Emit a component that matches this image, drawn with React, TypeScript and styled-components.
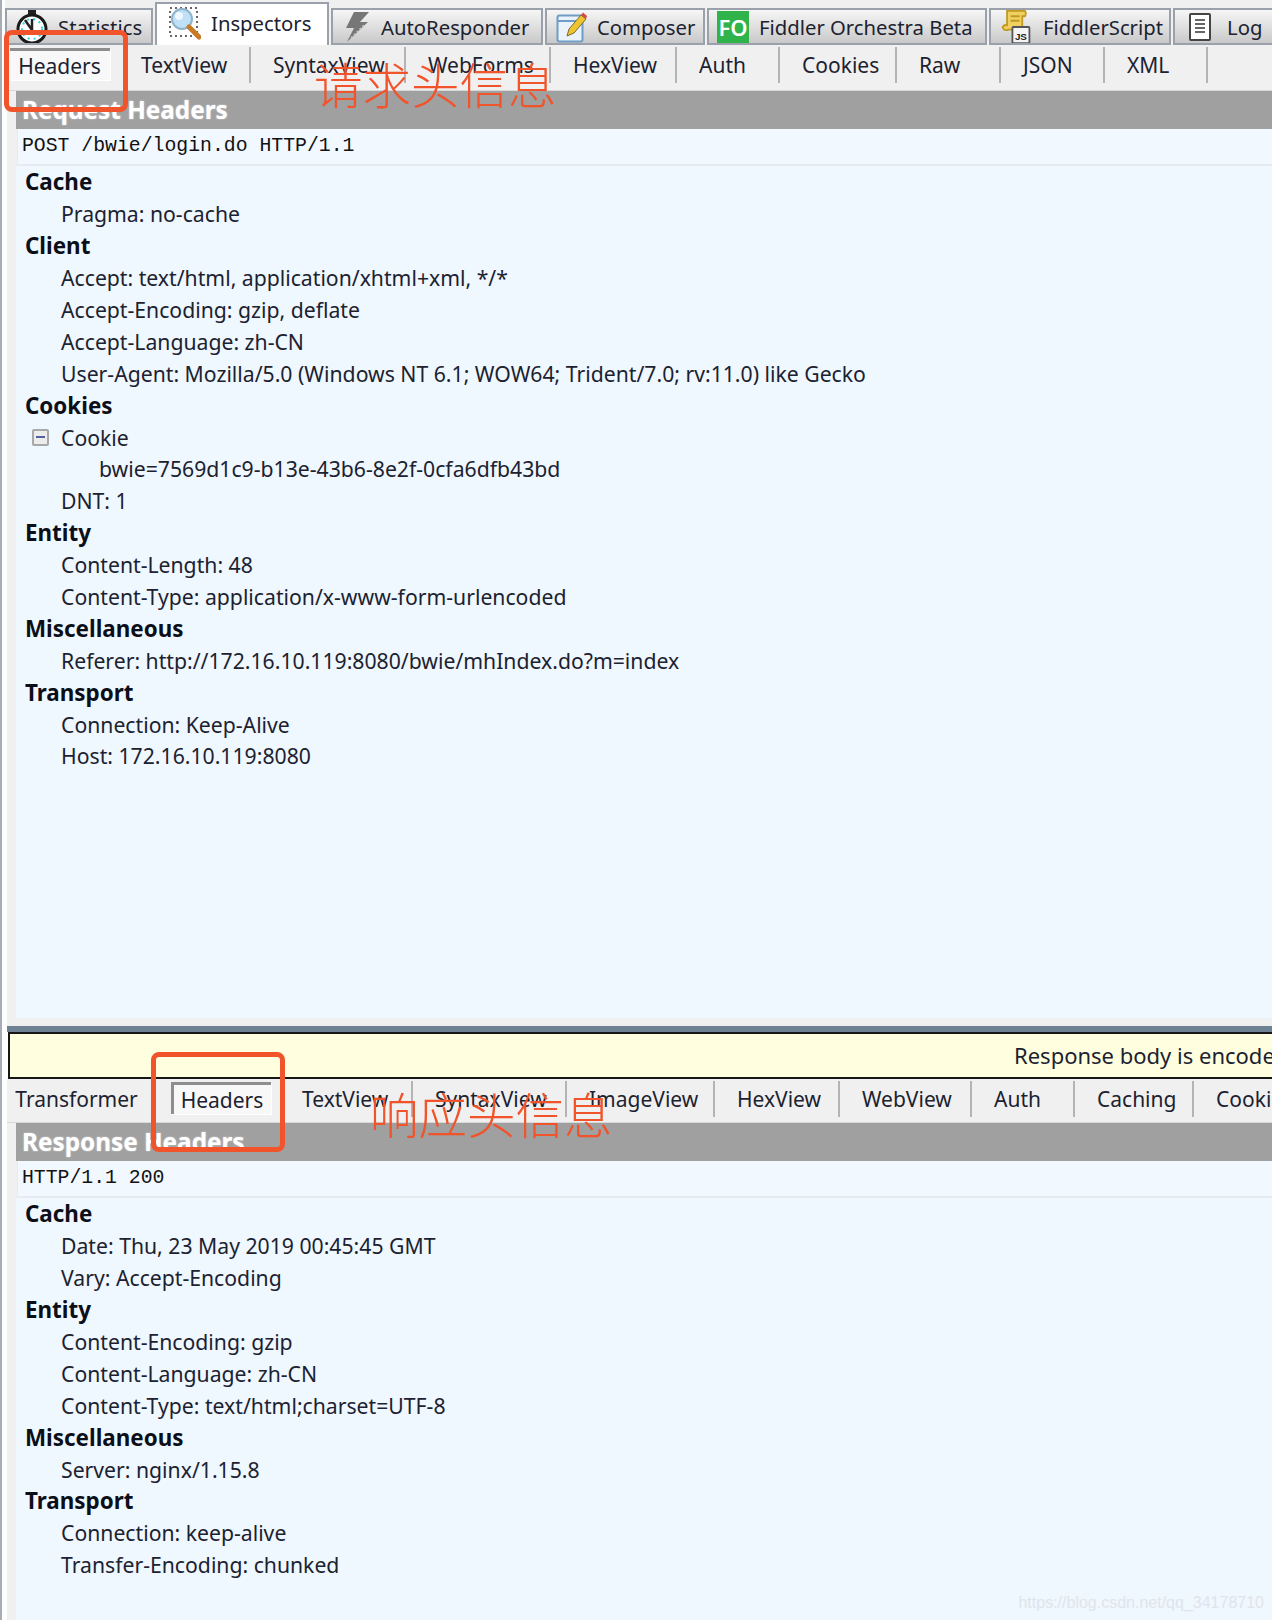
import React from "react";
import styled, { createGlobalStyle } from "styled-components";

const Global = createGlobalStyle`
  html, body {
    margin: 0;
    padding: 0;
    background: #fff;
  }
  * {
    box-sizing: border-box;
  }
`;

const Page = styled.div`
  position: relative;
  width: 1272px;
  height: 1620px;
  overflow: hidden;
  background: #fff;
  border-left: 2px solid #a6adb5;
  padding-left: 5px;
  font-family: "Noto Sans", "Noto Sans CJK SC", sans-serif;
  font-size: 21.2px;
  color: #1c2230;
`;

const TopTabs = styled.div`
  display: flex;
  align-items: flex-end;
  height: 45px;
  margin-left: -2px;
  background: #f0f0f0;
  font-size: 20.3px;
  white-space: nowrap;
`;

const Tab = styled.div<{ $w: number; $pad: number; $gap: number; $active?: boolean }>`
  flex: none;
  display: flex;
  align-items: center;
  gap: ${(p) => p.$gap}px;
  width: ${(p) => p.$w}px;
  height: ${(p) => (p.$active ? 43 : 37)}px;
  padding-left: ${(p) => p.$pad}px;
  padding-bottom: ${(p) => (p.$active ? 4 : 0)}px;
  margin-right: 2px;
  border: 2px solid #9aa1aa;
  border-bottom: ${(p) => (p.$active ? "none" : "2px solid #9aa1aa")};
  background: ${(p) => (p.$active ? "#fff" : "linear-gradient(#f6f6f6, #c9c9c9)")};
  overflow: hidden;
`;

const Pane = styled.div<{ $h: number }>`
  display: flex;
  flex-direction: column;
  height: ${(p) => p.$h}px;
  background: #f0f0f0;
  overflow: hidden;
`;

const SubTabs = styled.div<{ $h: number }>`
  flex: none;
  display: flex;
  height: ${(p) => p.$h}px;
  padding-top: 2px;
  margin-left: -7px;
  border-bottom: 1px solid #d8d8d8;
  font-size: 21px;
  white-space: nowrap;
`;

const SubTab = styled.div<{ $w: number }>`
  flex: none;
  display: flex;
  align-items: center;
  width: ${(p) => p.$w}px;
  height: 36px;
  padding-left: 22px;
  border-right: 2px solid #b4b4b4;
`;

const PlainTab = styled.div<{ $w: number; $lead?: number }>`
  flex: none;
  display: flex;
  align-items: flex-start;
  justify-content: center;
  width: ${(p) => p.$w}px;
  height: 36px;
  padding-left: ${(p) => p.$lead ?? 0}px;
  line-height: 36px;
`;

const ActiveTab = styled.div<{ $left?: boolean }>`
  display: flex;
  align-items: center;
  justify-content: center;
  width: 100px;
  height: 32px;
  margin-top: 1px;
  padding-top: 1px;
  border-top: 3px solid #8e8e8e;
  border-left: ${(p) => (p.$left ? "3px solid #8e8e8e" : "none")};
  background: #f8f8f8;
  box-shadow: 1px 1px 0 #fff;
`;

const Body = styled.div`
  flex: 1;
  display: flex;
  flex-direction: column;
  padding-left: 9px;
`;

const TitleBar = styled.div`
  flex: none;
  display: flex;
  align-items: center;
  height: 38px;
  padding: 0 0 2px 6px;
  background: #a0a0a0;
  color: #fff;
  font-size: 24.3px;
  font-weight: 700;
  text-shadow: 0 0 2px #d8d8d8;
`;

const StartLine = styled.div`
  flex: none;
  display: flex;
  align-items: center;
  height: 37px;
  padding: 0 0 2px 4px;
  margin-left: 1px;
  background: #f2f8ff;
  border-bottom: 2px solid #e6ebf0;
  border-left: 1px solid #e6ebf0;
  font-family: "Liberation Mono", monospace;
  font-size: 19.8px;
  color: #111;
`;

const Rows = styled.div`
  flex: 1;
  background: #eff7ff;
`;

const Row = styled.div<{ $level: number; $bold?: boolean }>`
  display: flex;
  align-items: center;
  height: 31.9px;
  padding-left: ${(p) => [9, 45, 83][p.$level]}px;
  font-size: ${(p) => (p.$bold ? 22.4 : 21.2)}px;
  font-weight: ${(p) => (p.$bold ? 700 : 400)};
  color: ${(p) => (p.$bold ? "#0c0f18" : "#1c2230")};
  white-space: nowrap;
`;

const ToggleRow = styled(Row)`
  padding-left: 16px;
`;

const Toggle = styled.span`
  flex: none;
  display: flex;
  align-items: center;
  justify-content: center;
  width: 17px;
  height: 17px;
  margin-right: 12px;
  border: 2px solid #a8a8a8;
  border-radius: 2px;
  background: #ececec;
  &::after {
    content: "";
    width: 9px;
    height: 2px;
    background: #5560a0;
  }
`;

const DividerGap = styled.div`
  height: 8px;
  background: #f0f0f0;
`;

const SteelBar = styled.div`
  height: 6px;
  background: #6f8294;
`;

const Notice = styled.div`
  display: flex;
  align-items: center;
  height: 47px;
  padding: 0 0 2px 1004px;
  margin-left: 1px;
  border: 2px solid #161616;
  border-right: none;
  background: #ffffe0;
  font-size: 22px;
  white-space: nowrap;
  overflow: hidden;
`;

const FoBadge = styled.div`
  flex: none;
  display: flex;
  align-items: center;
  justify-content: center;
  width: 32px;
  height: 32px;
  background: #2fb34a;
  color: #fff;
  font-size: 22px;
  font-weight: 600;
`;

const RedBox = styled.div<{ $x: number; $y: number; $w: number; $h: number }>`
  position: absolute;
  left: ${(p) => p.$x}px;
  top: ${(p) => p.$y}px;
  width: ${(p) => p.$w}px;
  height: ${(p) => p.$h}px;
  border: 5px solid #f1532a;
  border-radius: 8px;
`;

const Note = styled.div<{ $x: number; $y: number }>`
  position: absolute;
  left: ${(p) => p.$x}px;
  top: ${(p) => p.$y}px;
  font-family: "Noto Sans CJK SC", sans-serif;
  font-size: 48.5px;
  font-weight: 300;
  line-height: 52px;
  color: #f1532a;
  white-space: nowrap;
`;

const Watermark = styled.div`
  position: absolute;
  right: 8px;
  bottom: 8px;
  font-family: "Liberation Sans", sans-serif;
  font-size: 16px;
  color: #dfe5ea;
`;

const StopwatchIcon = () => (
  <svg width="32" height="36" viewBox="0 0 32 36">
    <rect x="12" y="0" width="8" height="5" fill="#222" />
    <circle cx="16" cy="20" r="14" fill="#fff" stroke="#1a1a1a" strokeWidth="3" />
    <circle cx="16" cy="20" r="10" fill="none" stroke="#35d0dc" strokeWidth="2" strokeDasharray="2 4" />
    <path d="M9 11 L16 21 L16 10" fill="none" stroke="#222" strokeWidth="2.5" />
  </svg>
);

const InspectIcon = () => (
  <svg width="32" height="34" viewBox="0 0 32 34">
    <rect x="1" y="2" width="27" height="28" fill="none" stroke="#666" strokeWidth="2" strokeDasharray="2 3" />
    <circle cx="13" cy="13" r="10" fill="#bfe0f6" stroke="#8fb4cc" strokeWidth="2" />
    <circle cx="10" cy="10" r="4" fill="#eef8ff" />
    <path d="M20 21 L30 31" stroke="#c87a28" strokeWidth="5" strokeLinecap="round" />
  </svg>
);

const BoltIcon = () => (
  <svg width="26" height="32" viewBox="0 0 26 32">
    <path d="M10 1 H25 L16 11 H24 L3 31 L10 17 H2 Z" fill="#777" />
    <path d="M7 27 L20 14" stroke="#c8c8c8" strokeWidth="1.5" strokeDasharray="2 2" />
  </svg>
);

const ComposeIcon = () => (
  <svg width="32" height="32" viewBox="0 0 32 32">
    <rect x="1.5" y="4.5" width="25" height="26" rx="2" fill="#eaf2fb" stroke="#6f9cc6" strokeWidth="2" />
    <path d="M2 10 H26" stroke="#6f9cc6" strokeWidth="2" />
    <path d="M11 25 L13 18 L25 4 L30 8 L18 22 Z" fill="#f0c430" stroke="#7a6a30" strokeWidth="1" />
    <path d="M25 4 L27 1.5 L31 5 L30 8 Z" fill="#d84a40" />
  </svg>
);

const ScriptIcon = () => (
  <svg width="32" height="34" viewBox="0 0 32 38">
    <path d="M6 1 H26 Q28 4 26 7 H23 V22 H8 Q2 24 1 19 Q3 16 6 17 Z" fill="#f0d060" stroke="#c09a20" strokeWidth="2" />
    <path d="M10 7 H20 M10 12 H20" stroke="#c09a20" strokeWidth="2" />
    <rect x="12" y="19" width="19" height="18" rx="1" fill="#f4f4f4" stroke="#555" strokeWidth="2" />
    <text x="21.5" y="33" fontFamily="Liberation Sans, sans-serif" fontSize="11" fontWeight="700" textAnchor="middle" fill="#222">JS</text>
  </svg>
);

const LogIcon = () => (
  <svg width="22" height="28" viewBox="0 0 22 28">
    <rect x="1" y="1" width="20" height="26" rx="1" fill="#fff" stroke="#444" strokeWidth="2" />
    <path d="M6 7 H16 M6 11 H16 M6 15 H16 M6 19 H16" stroke="#666" strokeWidth="2" />
  </svg>
);

type Line = { text: string; level?: number; bold?: boolean; toggle?: boolean };

const requestRows: Line[] = [
  { text: "Cache", bold: true },
  { text: "Pragma: no-cache" },
  { text: "Client", bold: true },
  { text: "Accept: text/html, application/xhtml+xml, */*" },
  { text: "Accept-Encoding: gzip, deflate" },
  { text: "Accept-Language: zh-CN" },
  { text: "User-Agent: Mozilla/5.0 (Windows NT 6.1; WOW64; Trident/7.0; rv:11.0) like Gecko" },
  { text: "Cookies", bold: true },
  { text: "Cookie", toggle: true },
  { text: "bwie=7569d1c9-b13e-43b6-8e2f-0cfa6dfb43bd", level: 2 },
  { text: "DNT: 1" },
  { text: "Entity", bold: true },
  { text: "Content-Length: 48" },
  { text: "Content-Type: application/x-www-form-urlencoded" },
  { text: "Miscellaneous", bold: true },
  { text: "Referer: http://172.16.10.119:8080/bwie/mhIndex.do?m=index" },
  { text: "Transport", bold: true },
  { text: "Connection: Keep-Alive" },
  { text: "Host: 172.16.10.119:8080" },
];

const responseRows: Line[] = [
  { text: "Cache", bold: true },
  { text: "Date: Thu, 23 May 2019 00:45:45 GMT" },
  { text: "Vary: Accept-Encoding" },
  { text: "Entity", bold: true },
  { text: "Content-Encoding: gzip" },
  { text: "Content-Language: zh-CN" },
  { text: "Content-Type: text/html;charset=UTF-8" },
  { text: "Miscellaneous", bold: true },
  { text: "Server: nginx/1.15.8" },
  { text: "Transport", bold: true },
  { text: "Connection: keep-alive" },
  { text: "Transfer-Encoding: chunked" },
];

const requestTabs: [string, number][] = [
  ["TextView", 132],
  ["SyntaxView", 155],
  ["WebForms", 145],
  ["HexView", 126],
  ["Auth", 103],
  ["Cookies", 117],
  ["Raw", 104],
  ["JSON", 104],
  ["XML", 103],
];

const responseTabs: [string, number][] = [
  ["TextView", 133],
  ["SyntaxView", 154],
  ["ImageView", 148],
  ["HexView", 125],
  ["WebView", 132],
  ["Auth", 103],
  ["Caching", 119],
  ["Cookies", 118],
];

const renderRows = (rows: Line[]) =>
  rows.map((r, i) =>
    r.toggle ? (
      <ToggleRow key={i} $level={1}>
        <Toggle />
        {r.text}
      </ToggleRow>
    ) : (
      <Row key={i} $level={r.bold ? 0 : r.level ?? 1} $bold={r.bold}>
        {r.text}
      </Row>
    )
  );

export default function App() {
  return (
    <Page>
      <Global />
      <TopTabs>
        <Tab $w={148} $pad={9} $gap={10}>
          <StopwatchIcon />
          Statistics
        </Tab>
        <Tab $w={174} $pad={12} $gap={10} $active>
          <InspectIcon />
          Inspectors
        </Tab>
        <Tab $w={212} $pad={11} $gap={11}>
          <BoltIcon />
          AutoResponder
        </Tab>
        <Tab $w={160} $pad={9} $gap={9}>
          <ComposeIcon />
          Composer
        </Tab>
        <Tab $w={280} $pad={8} $gap={10}>
          <FoBadge>FO</FoBadge>
          Fiddler Orchestra Beta
        </Tab>
        <Tab $w={182} $pad={9} $gap={11}>
          <ScriptIcon />
          FiddlerScript
        </Tab>
        <Tab $w={110} $pad={14} $gap={16}>
          <LogIcon />
          Log
        </Tab>
      </TopTabs>
      <Pane $h={973}>
        <SubTabs $h={46}>
          <PlainTab $w={119}>
            <ActiveTab>Headers</ActiveTab>
          </PlainTab>
          {requestTabs.map(([name, w]) => (
            <SubTab key={name} $w={w}>
              {name}
            </SubTab>
          ))}
        </SubTabs>
        <Body>
          <TitleBar>Request Headers</TitleBar>
          <StartLine>POST /bwie/login.do HTTP/1.1</StartLine>
          <Rows>{renderRows(requestRows)}</Rows>
        </Body>
      </Pane>
      <DividerGap />
      <SteelBar />
      <Notice>Response body is encoded. Click to decode.</Notice>
      <Pane $h={541}>
        <SubTabs $h={44}>
          <PlainTab $w={153}>Transformer</PlainTab>
          <PlainTab $w={127} $lead={8}>
            <ActiveTab $left>Headers</ActiveTab>
          </PlainTab>
          {responseTabs.map(([name, w]) => (
            <SubTab key={name} $w={w}>
              {name}
            </SubTab>
          ))}
        </SubTabs>
        <Body>
          <TitleBar>Response Headers</TitleBar>
          <StartLine>HTTP/1.1 200</StartLine>
          <Rows>{renderRows(responseRows)}</Rows>
        </Body>
      </Pane>
      <RedBox $x={2} $y={30} $w={124} $h={82} />
      <RedBox $x={149} $y={1052} $w={134} $h={100} />
      <Note $x={312} $y={57}>请求头信息</Note>
      <Note $x={368} $y={1087}>响应头信息</Note>
      <Watermark>https://blog.csdn.net/qq_34178710</Watermark>
    </Page>
  );
}
